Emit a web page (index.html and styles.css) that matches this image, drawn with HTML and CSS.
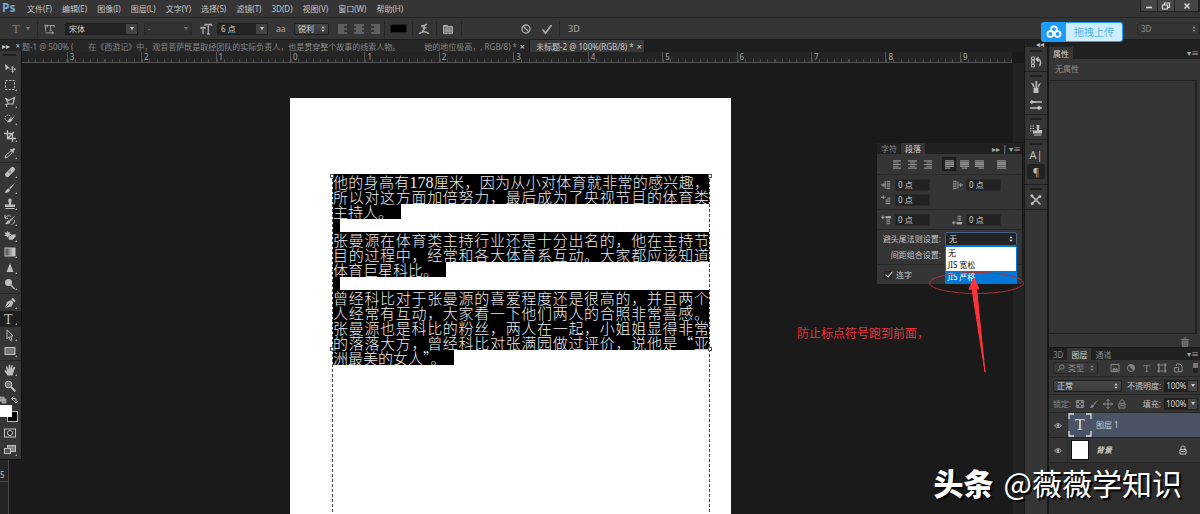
FILE: index.html
```
<!DOCTYPE html>
<html lang="zh-CN">
<head>
<meta charset="utf-8">
<title>未标题-2</title>
<link rel="stylesheet" href="styles.css">
</head>
<body>
<svg class="sprite" aria-hidden="true">
  <symbol id="move" viewBox="0 0 14 12"><path d="M1 1l6 5.2-3 .3L2.300 9z" fill="currentColor"/><path d="M10 4v7M6.500 7.500h7M10 4l-1 1.200h2zM10 11l-1-1.200h2zM13.500 7.500l-1.200-1v2z" stroke="currentColor" fill="currentColor" stroke-width=".9"/></symbol>
  <symbol id="marquee" viewBox="0 0 12 12"><rect x="1.500" y="1.500" width="9" height="9" fill="none" stroke="currentColor" stroke-dasharray="2.200 1.400"/></symbol>
  <symbol id="lasso" viewBox="0 0 12 12"><path d="M1.500 2l3 2.500L10.500 1.500 9 8H4.500zM4.500 8L2 8.500l1 2.500" fill="none" stroke="currentColor" stroke-width="1.200"/></symbol>
  <symbol id="quick" viewBox="0 0 12 12"><circle cx="4" cy="5" r="3" fill="none" stroke="currentColor" stroke-dasharray="1.500 1"/><path d="M11.500 1.500L7.500 6 6 5.500C4.500 6 4.500 8 3 9c2 .8 4.500.3 5-2z" fill="currentColor"/></symbol>
  <symbol id="crop" viewBox="0 0 12 12"><path d="M3.500 0v8.500H12M0 3.500h8.500V12M4 8l6-6" fill="none" stroke="currentColor" stroke-width="1.300"/></symbol>
  <symbol id="dropper" viewBox="0 0 12 12"><path d="M1 11l.6-2.300L6.500 4l1.600 1.600L3.300 10.400z" fill="none" stroke="currentColor"/><path d="M6 2.700L9.300 6l.9-.9-.7-.9C12.500 2 10.500 0 8 2.500l-1-.7z" fill="currentColor"/></symbol>
  <symbol id="heal" viewBox="0 0 12 12"><rect x="0" y="3.700" width="12" height="4.600" rx="2" transform="rotate(-45 6 6)" fill="currentColor"/><path d="M6 4.500v3M4.500 6h3" stroke="#444" stroke-width=".8" stroke-dasharray="1 .6"/></symbol>
  <symbol id="brush" viewBox="0 0 12 12"><path d="M11.500.5L6.500 7 5 6zM4.500 6.500L6 7.700C5.500 10.500 3 11 .5 10.500 2.500 9.500 2 7 4.500 6.500z" fill="currentColor"/></symbol>
  <symbol id="stamp" viewBox="0 0 12 12"><path d="M4.300 1.500C5 .2 7 .2 7.700 1.500 8 3 7 4 7 6.500h4V9H1V6.500h4C5 4 4 3 4.300 1.500zM1.500 10h9v1h-9z" fill="currentColor"/></symbol>
  <symbol id="history" viewBox="0 0 12 12"><path d="M11.500 1.500L7 7 5.500 6zM5 6.300l1.500 1.200C6 10 3.500 10.500 1 10c2-1 1.500-3.300 4-3.700z" fill="currentColor"/><path d="M1 4c2-3 4-2.500 6-1.500M1 1v3.200h3M10.500 6c0 2.500-1 4-3 4.500" fill="none" stroke="currentColor"/></symbol>
  <symbol id="eraser" viewBox="0 0 14 12"><path d="M4 0l1 2 2-1-.5 2L9 4 6.500 5l.5 2-2-.5L3.500 8 3 6 .5 6 2 4 .5 2l2.300.3z" fill="currentColor"/><path d="M5 8l4-3.500 4.500-.5v3L10 10.500H6z" fill="currentColor"/></symbol>
  <symbol id="gradient" viewBox="0 0 12 12"><rect x="1" y="2" width="10" height="8" fill="url(#fade)" stroke="#bbb"/></symbol>
  <linearGradient id="fade"><stop stop-color="#444"/><stop offset="1" stop-color="#ddd"/></linearGradient>
  <symbol id="sharpen" viewBox="0 0 12 12"><path d="M6 1l3.500 9h-7z" fill="currentColor"/></symbol>
  <symbol id="dodge" viewBox="0 0 12 12"><circle cx="4.500" cy="4.500" r="3.500" fill="currentColor"/><path d="M6.500 6.500l4 4.500" stroke="currentColor" stroke-width="1.300"/></symbol>
  <symbol id="pen" viewBox="0 0 12 12"><path d="M1 11L3 5l4-2 2.500 2.500-2 4z" fill="currentColor"/><path d="M8 1.500l3 3" stroke="currentColor" stroke-width="2"/><path d="M1.500 10.500L5.500 6.500" stroke="#333" stroke-width=".9"/></symbol>
  <symbol id="arrow" viewBox="0 0 12 12"><path d="M3 .8v9l2-2 1.500 3.700 1.500-.7L6.500 7.300 9 7z" fill="none" stroke="currentColor"/></symbol>
  <symbol id="rect" viewBox="0 0 12 12"><rect x="1" y="2.500" width="10" height="7" fill="#777" stroke="currentColor"/></symbol>
  <symbol id="hand" viewBox="0 0 12 12"><path d="M3.500 11.500L.5 7c0-1 1-1.200 2.500.5L2 3c0-1 1.200-1 1.500 0l1 2.500L4.700 1.200c.2-1 1.300-1 1.400 0L6.500 5 7.400 1.500c.3-1 1.400-.7 1.300.3L8.200 5.500 9.800 3c.6-.8 1.600-.2 1.300.7L9.500 8.500 8.500 11.500z" fill="currentColor"/></symbol>
  <symbol id="zoom" viewBox="0 0 12 12"><circle cx="4.500" cy="4.500" r="3.300" fill="#777" stroke="currentColor"/><path d="M7 7l4.300 4.300" stroke="currentColor" stroke-width="2"/></symbol>
  <symbol id="mask" viewBox="0 0 12 12"><rect x=".5" y="2" width="11" height="8" fill="none" stroke="currentColor"/><circle cx="6" cy="6" r="2.500" fill="#222" stroke="currentColor"/></symbol>
  <symbol id="screens" viewBox="0 0 12 12"><rect x="3.500" y="1.500" width="8" height="6" fill="#888" stroke="currentColor"/><rect x=".5" y="4.500" width="6" height="5" fill="#555" stroke="currentColor"/></symbol>
  <symbol id="left" viewBox="0 0 10 10"><path d="M0 1h9M0 3h6M0 5h9M0 7h6M0 9h9" stroke="currentColor" stroke-width="1.200"/></symbol>
  <symbol id="center" viewBox="0 0 10 10"><path d="M0 1h10M2 3h6M0 5h10M2 7h6M0 9h10" stroke="currentColor" stroke-width="1.200"/></symbol>
  <symbol id="right" viewBox="0 0 10 10"><path d="M1 1h9M4 3h6M1 5h9M4 7h6M1 9h9" stroke="currentColor" stroke-width="1.200"/></symbol>
  <symbol id="jleft" viewBox="0 0 10 10"><path d="M0 1h10M0 3h10M0 5h10M0 7h10M0 9h6" stroke="currentColor" stroke-width="1.500"/></symbol>
  <symbol id="jcenter" viewBox="0 0 10 10"><path d="M0 1h10M0 3h10M0 5h10M0 7h10M2 9h6" stroke="currentColor" stroke-width="1.500"/></symbol>
  <symbol id="jright" viewBox="0 0 10 10"><path d="M0 1h10M0 3h10M0 5h10M0 7h10M4 9h6" stroke="currentColor" stroke-width="1.500"/></symbol>
  <symbol id="jall" viewBox="0 0 10 10"><path d="M0 1h10M0 3h10M0 5h10M0 7h10M0 9h10" stroke="currentColor" stroke-width="1.500"/></symbol>
  <symbol id="indl" viewBox="0 0 12 10"><path d="M0 5h5M2.500 3v4M6 1h4M6 3h4M6 5h4M6 7h4M6 9h4M4.500 1v8" stroke="currentColor" stroke-width=".9"/></symbol>
  <symbol id="indr" viewBox="0 0 12 10"><path d="M7 5h5M9.500 3v4M1 1h4M1 3h4M1 5h4M1 7h4M1 9h4M6.500 1v8" stroke="currentColor" stroke-width=".9"/></symbol>
  <symbol id="first" viewBox="0 0 12 10"><path d="M0 2h5M2.500 0v4M7 3h3M5 5h5M5 7h5M5 9h5" stroke="currentColor" stroke-width=".9"/></symbol>
  <symbol id="before" viewBox="0 0 12 10"><path d="M0 2h4M2 0v4" stroke="currentColor"/><path d="M5 2h6" stroke="currentColor" stroke-width="2.500"/><path d="M6 5h4M6 7h4M6 9h4" stroke="currentColor" stroke-width=".9"/></symbol>
  <symbol id="after" viewBox="0 0 12 10"><path d="M0 8h4M2 6v4" stroke="currentColor"/><path d="M5 8.500h6" stroke="currentColor" stroke-width="2.500"/><path d="M6 1h4M6 3h4M6 5h4" stroke="currentColor" stroke-width=".9"/></symbol>
  <symbol id="eye" viewBox="0 0 10 8"><path d="M.8 4.500C2.500.8 7.500.8 9.200 4.500 7.500 7.200 2.500 7.200.8 4.500z" fill="none" stroke="currentColor"/><circle cx="5" cy="4" r="1.500" fill="currentColor"/></symbol>
  <symbol id="lock" viewBox="0 0 10 10"><path d="M3 4.500V2.500C3 .5 7 .5 7 2.500v2M2 4.500h6v4.500H2zM3 6.500h4" fill="none" stroke="currentColor"/></symbol>
  <symbol id="updown" viewBox="0 0 6 8"><path d="M3 0l2.500 3h-5zM3 8L.5 5h5z" fill="currentColor"/></symbol>
</svg>

<div class="app">
  <header class="menubar">
    <span class="brand">Ps</span>
    <nav class="menus">
      <button>文件(F)</button><button>编辑(E)</button><button>图像(I)</button><button>图层(L)</button><button>文字(Y)</button><button>选择(S)</button><button>滤镜(T)</button><button>3D(D)</button><button>视图(V)</button><button>窗口(W)</button><button>帮助(H)</button>
    </nav>
    <div class="window-buttons">
      <button aria-label="最小化"><svg viewBox="0 0 10 8"><path d="M2 5.500h6" stroke="#ddd" stroke-width="1.600"/></svg></button>
      <button aria-label="还原"><svg viewBox="0 0 10 8"><path d="M3.500 2.500V1h5v4.500H7M1.500 3h5v4h-5z" fill="none" stroke="#ddd" stroke-width="1.200"/></svg></button>
      <button class="close" aria-label="关闭"><svg viewBox="0 0 10 8"><path d="M2.500 1.500l5 5M7.500 1.500l-5 5" stroke="#ddd" stroke-width="1.400"/></svg></button>
    </div>
  </header>

  <div class="options">
    <button class="tool-preset">T <i class="caret"></i></button>
    <button class="orient" aria-label="切换方向"><svg viewBox="0 0 14 12"><path d="M3 1v8M1.500 3L3 1l1.500 2M5 2h8M5 1v3M13 1v3M9 2v6M7.500 8h3M3 10.500h9M10.500 9l2 1.500-2 1.500" fill="none" stroke="currentColor"/></svg></button>
    <span class="combo font"><select aria-label="字体"><option>宋体</option></select></span>
    <span class="combo style"><select aria-label="样式" disabled><option>-</option></select></span>
    <svg class="size-icon" viewBox="0 0 12 12"><path d="M1 6V4.500h4V6M3 5v6M5 3V1.500h6.500V3M8.300 2v9M7 11h2.800" fill="none" stroke="currentColor" stroke-width="1.300"/></svg>
    <span class="combo size"><select aria-label="字号"><option>6 点</option></select></span>
    <span class="aa">a<small>a</small></span>
    <span class="combo alias spin"><select aria-label="消除锯齿"><option>锐利</option></select><svg><use href="#updown"/></svg></span>
    <div class="group aligns">
      <button aria-label="左对齐"><svg><use href="#left"/></svg></button><button aria-label="居中"><svg><use href="#center"/></svg></button><button aria-label="右对齐"><svg><use href="#right"/></svg></button>
    </div>
    <div class="group"><button class="color" aria-label="颜色"></button></div>
    <div class="group warp"><button aria-label="变形"><svg viewBox="0 0 12 12"><path d="M3 3c3 0 5-1 6-2M6.500 2L6 7M4.500 5h4M1.500 11c1-3 8-3 9 0M6 6.500L4 8.500" fill="none" stroke="currentColor" stroke-width="1.300"/></svg></button></div>
    <div class="group folder"><button aria-label="面板"><svg viewBox="0 0 12 12"><path d="M1.500 2.500h4v1h5v7h-9z" fill="#777" stroke="currentColor"/><path d="M1 3h5M3 6h6M3 8h6" stroke="currentColor"/></svg></button></div>
    <div class="group commit">
      <button aria-label="取消"><svg viewBox="0 0 12 12"><circle cx="6" cy="6" r="4" fill="none" stroke="currentColor" stroke-width="1.300"/><path d="M3 3l6 6" stroke="currentColor" stroke-width="1.300"/></svg></button>
      <button aria-label="提交"><svg viewBox="0 0 12 12"><path d="M1.500 6.500L4.500 10l6-8" fill="none" stroke="currentColor" stroke-width="1.800"/></svg></button>
    </div>
    <div class="group three"><button>3D</button></div>
    <span class="combo workspace-pick spin"><select aria-label="工作区"><option>3D</option></select><svg><use href="#updown"/></svg></span>
  </div>

  <main class="workspace">
    <div class="left-column">
      <div class="toolbar-head"><span>▸▸</span><span>×</span></div>
      <div class="toolbar">
        <i class="grip"></i>
        <div class="tools">
          <button class="plain" aria-label="移动"><svg><use href="#move"/></svg></button>
          <button aria-label="选框"><svg><use href="#marquee"/></svg></button>
          <button aria-label="套索"><svg><use href="#lasso"/></svg></button>
          <button aria-label="快速选择"><svg><use href="#quick"/></svg></button>
          <button aria-label="裁剪"><svg><use href="#crop"/></svg></button>
          <button aria-label="吸管"><svg><use href="#dropper"/></svg></button>
        </div>
        <div class="tools">
          <button aria-label="修复"><svg><use href="#heal"/></svg></button>
          <button aria-label="画笔"><svg><use href="#brush"/></svg></button>
          <button aria-label="图章"><svg><use href="#stamp"/></svg></button>
          <button aria-label="历史画笔"><svg><use href="#history"/></svg></button>
          <button aria-label="橡皮擦"><svg><use href="#eraser"/></svg></button>
          <button aria-label="渐变"><svg><use href="#gradient"/></svg></button>
          <button aria-label="锐化"><svg><use href="#sharpen"/></svg></button>
          <button aria-label="减淡"><svg><use href="#dodge"/></svg></button>
        </div>
        <div class="tools">
          <button aria-label="钢笔"><svg><use href="#pen"/></svg></button>
          <button class="type active">T</button>
          <button aria-label="路径选择"><svg><use href="#arrow"/></svg></button>
          <button aria-label="矩形"><svg><use href="#rect"/></svg></button>
        </div>
        <div class="tools">
          <button aria-label="抓手"><svg><use href="#hand"/></svg></button>
          <button class="plain" aria-label="缩放"><svg><use href="#zoom"/></svg></button>
        </div>
        <svg class="swatches" viewBox="0 0 22 30"><path d="M0 2h4v4H0zM2 4h4v4H2z" fill="#888" stroke="#bbb" stroke-width=".7"/><path d="M12 3.500h4v4M13.500 1.500l-2 2 2 2M14 6l2 2 2-2" fill="none" stroke="#bbb"/><rect x="7.500" y="16.500" width="10" height="10" fill="#000" stroke="#bbb"/><path d="M0 10h12v12H0z" fill="#fff"/></svg>
        <div class="tools">
          <button class="plain" aria-label="快速蒙版"><svg><use href="#mask"/></svg></button>
          <button aria-label="屏幕模式"><svg><use href="#screens"/></svg></button>
        </div>
      </div>
      <div class="vruler"><span>5</span></div>
    </div>

    <section class="document">
      <div class="doc-tabs">
        <button class="doc-tab first"><span>题-1 @ 500% (</span><span class="title">在《西游记》中，观音菩萨既是取经团队的实际负责人，也是贯穿整个故事的线索人物。</span><span>她的地位极高，, RGB/8) *</span><b>×</b></button>
        <button class="doc-tab current"><span>未标题-2 @ 100%(RGB/8) *</span><b>×</b></button>
      </div>
      <div class="ruler"><span></span><span>3</span><span>2</span><span>1</span><span>0</span><span>1</span><span>2</span><span>3</span><span>4</span><span>5</span><span>6</span><span>7</span><span>8</span><span>9</span></div>
      <div class="canvas">
        <article class="page">
          <div class="text-frame">
            <i class="handle tl"></i><i class="handle tr"></i><i class="handle bl"></i><i class="handle br"></i>
            <p>
              <span class="full">他的身高有<span class="num">178</span>厘米，因为从小对体育就非常的感兴趣，</span>
              <span class="full">所以对这方面加倍努力，最后成为了央视节目的体育类</span>
              <span class="last">主持人。</span>
            </p>
            <p>
              <span class="full">张曼源在体育类主持行业还是十分出名的，他在主持节</span>
              <span class="full">目的过程中，经常和各大体育系互动。大家都应该知道</span>
              <span class="last">体育巨星科比。</span>
            </p>
            <p>
              <span class="full">曾经科比对于张曼源的喜爱程度还是很高的，并且两个</span>
              <span class="full">人经常有互动，大家看一下他们两人的合照非常喜感。</span>
              <span class="full">张曼源也是科比的粉丝，两人在一起，小姐姐显得非常</span>
              <span class="full">的落落大方，曾经科比对张满园做过评价，说他是“亚</span>
              <span class="last">洲最美的女人”。</span>
            </p>
          </div>
        </article>
      </div>
    </section>

    <aside class="rail">
      <div class="rail-head">◂◂</div>
      <div class="rail-group"><button aria-label="历史记录"><svg viewBox="0 0 12 12"><path d="M1.500 1h3v2.500h-3zM1.500 4.700h3v2.500h-3zM1.500 8.400h3v2.500h-3z" fill="none" stroke="currentColor"/><path d="M7 3.500h2c2 1 2 4 .5 6.500M8.500 1L6.300 3.500l2.200 2" fill="none" stroke="currentColor" stroke-width="1.500"/></svg></button></div>
      <div class="rail-group"><button aria-label="画笔"><svg viewBox="0 0 12 12"><path d="M3.500 7h5v5h-5zM1 2l2.500.5L5 7H4zM5.500 0h1.600v7H5.500zM11 2L8.500 3 7.500 7h.7z" fill="currentColor"/></svg></button><button aria-label="画笔预设"><svg viewBox="0 0 12 12"><path d="M0 3h12M0 9h12" stroke="currentColor" stroke-width="1.300"/><path d="M1 1l5 2-5 2zM7 9c1-3 4-2 4 0s-3 3-4 0z" fill="currentColor"/></svg></button></div>
      <div class="rail-group"><button aria-label="仿制源"><svg viewBox="0 0 12 12"><path d="M0 2h4M0 4.500h4M0 7h4" stroke="currentColor" stroke-dasharray="1.500 1"/><path d="M6.500 1h3L9 6h3v3.500H3V6.500h4zM4 10.500h7.500v1H4z" fill="currentColor"/></svg></button></div>
      <div class="rail-group text-panels"><button class="char">A|</button><button class="active">¶</button></div>
      <div class="rail-group"><button aria-label="工具预设"><svg viewBox="0 0 12 12"><path d="M2 2l8.500 8.500M10 2L2 10" stroke="currentColor" stroke-width="1.600"/><path d="M0 1.500L2 0l1.800 2L2 3.800zM9 1l2.500.5L11 4 8.500 3.500zM.5 9l2-1L4 10 1.500 11.500z" fill="currentColor"/></svg></button></div>
    </aside>

    <aside class="panels">
      <div class="panel-gap"></div>
      <section class="panel properties">
        <div class="panel-tabs"><button class="current">属性</button><span class="panel-menu">▾≡</span></div>
        <p class="empty">无属性</p>
        <div class="void"></div>
        <footer><button aria-label="删除"><svg viewBox="0 0 10 10"><path d="M1 2.500h8M3.500 1h3M2 4h6L7.500 9.500h-5z" fill="#666" stroke="#777"/></svg></button></footer>
      </section>
      <section class="panel layers">
        <div class="panel-tabs"><button>3D</button><button class="current">图层</button><button>通道</button><span class="panel-menu">▾≡</span></div>
        <div class="row filter">
          <span class="combo kind spin"><svg class="search" viewBox="0 0 8 8"><circle cx="4.800" cy="3" r="2.200" fill="none" stroke="currentColor"/><path d="M3 4.500L.8 7" stroke="currentColor"/></svg><select aria-label="类型"><option>类型</option></select><svg><use href="#updown"/></svg></span>
          <svg viewBox="0 0 10 10"><path d="M1 1.500h8v7H1z" fill="none" stroke="currentColor"/><path d="M2 7.500l2-3 1.500 1.500L7 5l1.500 2.500z" fill="currentColor"/></svg>
          <svg viewBox="0 0 10 10"><circle cx="5" cy="5" r="3.500" fill="none" stroke="currentColor"/><path d="M2.500 2.500a3.500 3.500 0 0 1 5 5z" fill="currentColor"/></svg>
          <span class="serif">T</span>
          <svg viewBox="0 0 10 10"><path d="M2 2h6v6H2zM0 2h2M8 2h2M0 8h2M8 8h2M2 0v10M8 0v10" fill="none" stroke="currentColor"/></svg>
          <svg viewBox="0 0 10 10"><path d="M3.500 3V1h3.500l2 2v5.500H5.500M1.500 4.500h4v4.500h-4z" fill="none" stroke="currentColor"/></svg>
          <i class="toggle"></i>
        </div>
        <div class="row">
          <span class="combo blend spin"><select aria-label="混合模式"><option>正常</option></select><svg><use href="#updown"/></svg></span>
          <label class="amount">不透明度:<input value="100%"></label><i class="drop"></i>
        </div>
        <div class="row locks">
          <span class="dim">锁定:</span>
          <svg viewBox="0 0 10 10"><path d="M1.500 1.500h7v7h-7z" fill="none" stroke="currentColor"/><path d="M2 2h2v2H2zM6 2h2v2H6zM4 4h2v2H4zM2 6h2v2H2zM6 6h2v2H6z" fill="currentColor"/></svg>
          <svg><use href="#brush"/></svg>
          <svg viewBox="0 0 10 10"><path d="M5 0v10M0 5h10M3.500 2L5 .5 6.500 2M3.500 8L5 9.500 6.500 8M2 3.500L.5 5 2 6.500M8 3.500L9.500 5 8 6.500" fill="none" stroke="currentColor"/></svg>
          <svg><use href="#lock"/></svg>
          <label class="amount">填充:<input value="100%"></label><i class="drop"></i>
        </div>
        <ul class="layer-list">
          <li class="selected"><button class="eye" aria-label="可见"><svg><use href="#eye"/></svg></button><span class="thumb text"><svg viewBox="0 0 24 24"><path d="M1 6V1h5M18 1h5v5M23 18v5h-5M6 23H1v-5" fill="none" stroke="#ddd" stroke-width="1.300"/></svg>T</span><span class="name">图层 1</span></li>
          <li><button class="eye" aria-label="可见"><svg><use href="#eye"/></svg></button><span class="thumb blank"></span><span class="name italic">背景</span><svg class="locked"><use href="#lock"/></svg></li>
        </ul>
      </section>
    </aside>

    <section class="paragraph-panel">
      <div class="panel-tabs"><button>字符</button><button class="current">段落</button><span class="panel-menu">▸▸ | ▾≡</span></div>
      <div class="justify">
        <button aria-label="左对齐"><svg><use href="#left"/></svg></button><button aria-label="居中"><svg><use href="#center"/></svg></button><button aria-label="右对齐"><svg><use href="#right"/></svg></button>
        <button class="active" aria-label="末行左对齐"><svg><use href="#jleft"/></svg></button><button aria-label="末行居中"><svg><use href="#jcenter"/></svg></button><button aria-label="末行右对齐"><svg><use href="#jright"/></svg></button>
        <button class="all" aria-label="全部对齐"><svg><use href="#jall"/></svg></button>
      </div>
      <div class="fields">
        <label><svg><use href="#indl"/></svg><input aria-label="左缩进" value="0 点"></label>
        <label><svg><use href="#indr"/></svg><input aria-label="右缩进" value="0 点"></label>
        <label><svg><use href="#first"/></svg><input aria-label="首行缩进" value="0 点"></label>
      </div>
      <div class="fields">
        <label><svg><use href="#before"/></svg><input aria-label="段前" value="0 点"></label>
        <label><svg><use href="#after"/></svg><input aria-label="段后" value="0 点"></label>
      </div>
      <div class="rules">
        <label for="kinsoku">避头尾法则设置:</label>
        <div class="picker">
          <span class="combo kinsoku spin"><select id="kinsoku"><option>无</option></select><svg><use href="#updown"/></svg></span>
          <ul class="menu" role="listbox" aria-label="避头尾法则"><li role="option">无</li><li role="option">JIS 宽松</li><li role="option" class="hover" aria-selected="true">JIS 严格</li></ul>
        </div>
        <span class="second">间距组合设置:</span>
      </div>
      <label class="hyphen"><input type="checkbox" checked>连字</label>
    </section>

    <p class="note">防止标点符号跑到前面，</p>
    <svg class="marker" viewBox="0 0 96 110"><ellipse cx="47.500" cy="12" rx="47" ry="10.500" fill="none" stroke="#b03035"/><path d="M45 7l5 11-2.500-.5L56 101 43 18l-3 .5z" fill="#ff3338" stroke="#ff3338" stroke-linejoin="round"/></svg>
    <button class="upload"><svg viewBox="0 0 24 20"><g fill="none" stroke="#fff" stroke-width="2"><circle cx="12" cy="7" r="3.200"/><circle cx="8" cy="12.300" r="3.200"/><circle cx="16" cy="12.300" r="3.200"/></g></svg><span>拖拽上传</span></button>
    <div class="watermark"><b>头条</b><span>@薇薇学知识</span></div>
  </main>
</div>
</body>
</html>
```
FILE: styles.css
```
* { box-sizing: border-box; }
body, p, ul { margin: 0; padding: 0; }
ul { list-style: none; }
i { font-style: normal; }
body {
  background: #1a1a1a;
  color: #c4c4c4;
  font: 8px/12px "Noto Sans", "Noto Sans CJK SC", sans-serif;
}
button, input, select {
  appearance: none;
  margin: 0;
  padding: 0;
  border: 0;
  border-radius: 0;
  background: none;
  color: inherit;
  font: inherit;
  min-width: 0;
}
select:disabled { opacity: 1; }
svg { display: block; width: 10px; height: 10px; flex: none; }
.sprite { position: absolute; width: 0; height: 0; }
.app { display: flex; flex-direction: column; height: 100vh; overflow: hidden; }

/* Menu bar */
.menubar { display: flex; flex: none; height: 18px; background: #353535; border-bottom: 1px solid #252525; }
.brand { width: 27px; padding-left: 2px; color: #74a5d8; font-size: 12px; line-height: 16px; font-weight: 700; }
.menus { display: flex; gap: 10px; flex: 1; }
.menus button { line-height: 16px; }
.window-buttons { display: flex; height: 12px; background: #454545; border: 1px solid #222; border-top: 0; }
.window-buttons button { display: grid; place-items: center; width: 17px; border-right: 1px solid #222; }
.window-buttons .close { width: 24px; }
.window-buttons svg { height: 8px; }

/* Options bar */
.options { display: flex; flex: none; align-items: center; height: 22px; background: #353535; border-bottom: 1px solid #1c1c1c; color: #aaa; }
.options svg { width: 12px; height: 12px; }
.tool-preset { display: flex; align-items: center; gap: 6px; width: 38px; padding-left: 12px; border-right: 1px solid #292929; color: #808080; font: 13px/18px "Liberation Serif", serif; }
.caret { border: 2px solid transparent; border-top: 3px solid currentColor; border-bottom: 0; }
.orient { width: 25px; padding-left: 5px; }
.combo { display: flex; align-items: center; position: relative; height: 12px; border: 1px solid #1e1e1e; background: #242424; color: #d2d2d2; }
.combo select { flex: 1; width: 100%; padding-left: 3px; line-height: 10px; }
.combo::after { content: ""; position: absolute; right: 3px; border: 2px solid transparent; border-top: 3px solid #ccc; border-bottom: 0; pointer-events: none; }
.combo.spin { background: linear-gradient(#484848, #3a3a3a); border-radius: 2px; }
.combo.spin::after { display: none; }
.combo.spin svg:last-child { position: absolute; right: 3px; width: 4px; height: 6px; pointer-events: none; }
.font { width: 73px; margin-left: 2px; }
.style { width: 48px; margin-left: 6px; background: #323232; border-color: #292929; color: #777; }
.style::after { border-top-color: #777; }
.font select, .size select { background: linear-gradient(#444, #444) right / 11px 100% no-repeat; }
.size-icon { margin: 0 5px 0 8px; }
.size { width: 51px; }
.aa { margin: 0 8px; width: 10px; font-size: 9px; white-space: nowrap; }
.aa small { font-size: 8px; }
.alias { width: 35px; }
.group { display: flex; align-items: center; height: 16px; padding: 0 5px; border-right: 1px solid #292929; }
.aligns { gap: 6px; width: 56px; padding: 0 0 0 9px; color: #8a8a8a; }
.aligns svg { width: 10px; height: 10px; }
.color { width: 17px; height: 9px; background: #000; border: 1px solid #222; }
.group.warp { width: 24px; }
.group.folder { width: 25px; padding-left: 5px; }
.commit { gap: 9px; width: 98px; padding-left: 58px; }
.three { flex: 1; border: 0; padding-left: 8px; font-size: 9px; }
.workspace-pick { width: 63px; border-color: #292929; color: #888; }
.workspace-pick.spin { background: #353535; }

/* Tool column */
.workspace { display: flex; flex: 1; min-height: 0; position: relative; }
.left-column { display: flex; flex-direction: column; width: 22px; background: #1a1a1a; }
.toolbar-head { display: flex; justify-content: space-between; height: 11px; padding: 0 2px; background: #252525; font-size: 8px; line-height: 12px; }
.toolbar { display: flex; flex-direction: column; padding-top: 3px; background: #353535; border-right: 1px solid #111; border-bottom: 1px solid #111; color: #bebebe; }
.grip { height: 2px; width: 13px; margin-left: 3px; margin-bottom: 4px; background: #202020; }
.tools { display: grid; grid-auto-rows: 16px; row-gap: 1px; padding-bottom: 1px; }
.tools + .tools { row-gap: 0; border-top: 1px solid #272727; padding-top: 1px; }
.tools button { position: relative; display: grid; align-items: center; padding-left: 4px; text-align: left; }
.tools svg { width: 12px; height: 12px; }
.tools button::after { content: ""; position: absolute; right: 4px; bottom: 2px; border-left: 2px solid transparent; border-bottom: 2px solid #aaa; }
.tools .plain::after { display: none; }
.tools .type { font: 14px/15px "Liberation Serif", serif; }
.tools .active { background: #1e1e1e; }
.swatches { width: 22px; height: 30px; }
.vruler { flex: 1; width: 9px; background: #242424; border-right: 1px solid #484848; border-top: 0; padding-top: 9px; }
.vruler span { display: block; border-bottom: 1px solid #484848; }

/* Document */
.document { display: flex; flex-direction: column; flex: 1; min-width: 0; }
.doc-tabs { display: flex; height: 12px; flex: none; background: #1f1f1f; overflow: hidden; }
.doc-tab { display: flex; align-items: center; line-height: 11px; color: #858585; background: #262626; border-right: 1px solid #181818; white-space: pre; }
.doc-tab b { font-size: 9px; margin-left: 3px; color: #b5b5b5; }
.doc-tab.first { width: 508px; padding-right: 4px; }
.doc-tab .title { margin: 0 24px 0 15px; }
.doc-tab.first b { margin-left: auto; }
.doc-tab.current { background: #393939; color: #c8c8c8; padding: 0 2px 0 6px; }
.ruler { display: grid; grid-template-columns: 6fr repeat(12, 10fr) 7fr; flex: none; height: 11px; margin-right: 12px; background: #242424; border-bottom: 1px solid #555; }
.ruler span { padding-left: 2px; border-left: 1px solid #555; color: #a5a5a5; line-height: 9px; background: repeating-linear-gradient(to right, #4a4a4a 0 1px, transparent 1px 10%) bottom / 100% 3px no-repeat; }
.ruler span:first-child { border: 0; background-image: repeating-linear-gradient(to left, #4a4a4a 0 1px, transparent 1px 17%); }
.ruler span:last-child { background-image: repeating-linear-gradient(to right, #4a4a4a 0 1px, transparent 1px 14%); }
.canvas { flex: 1; min-height: 0; display: flex; justify-content: center; padding: 35px 25px 0 0; background: linear-gradient(#222, #222) right / 11px 100% no-repeat #1a1a1a; }
.page { width: 441px; padding: 76px 21px 0 42px; background: #fff; }
.text-frame { position: relative; height: 100%; color: #ececec; font: 300 15px/15px "Noto Sans CJK SC", sans-serif; background: repeating-linear-gradient(#444 0 3px, transparent 3px 5px) left / 1px 100% no-repeat, repeating-linear-gradient(#444 0 3px, transparent 3px 5px) right / 1px 100% no-repeat; padding: 0 1px; }
.text-frame p + p { position: relative; margin-top: 13px; }
.text-frame p + p::before { content: ""; position: absolute; top: -13px; left: 0; width: 7px; height: 13px; background: #000; }
.full { display: block; height: 15px; background: #000; text-align: justify; text-align-last: justify; white-space: nowrap; }
.last { display: block; width: fit-content; height: 15px; padding-right: 8px; background: #000; }
.num { font-family: "Liberation Serif", serif; font-size: 16px; }
.handle { position: absolute; z-index: 1; width: 4px; height: 4px; border: 1px solid #555; background: #fff; }
.tl { left: -2px; top: 0; }
.tr { right: -2px; top: 0; }
.bl { left: -2px; top: 173px; }
.br { right: -2px; top: 173px; }

/* Icon rail */
.rail { width: 25px; background: #353535; border: solid #181818; border-width: 0 2px 0 1px; color: #bdbdbd; }
.rail-head { height: 7px; padding-right: 3px; background: #202020; text-align: right; font-size: 8px; line-height: 7px; }
.rail-group { display: flex; flex-direction: column; align-items: center; padding-top: 6px; border-bottom: 1px solid #202020; background: linear-gradient(#202020, #202020) 50% 3px / 12px 2px no-repeat; }
.rail-group button { display: grid; place-items: center; width: 18px; height: 18px; }
.rail-group svg { width: 12px; height: 12px; }
.rail-group.text-panels { padding-bottom: 5px; }
.rail-group .char { font-size: 11px; }
.rail-group .active { height: 15px; background: #222; border-radius: 2px; font-size: 10px; }

/* Panels */
.panels { display: flex; flex-direction: column; width: 151px; background: #2d2d2d; }
.panel-gap { height: 7px; background: #202020; }
.panel { background: #353535; }
.panel-tabs { display: flex; height: 12px; background: #212121; color: #858585; }
.panel-tabs button { padding: 0 4px; line-height: 11px; }
.panel-tabs .current { background: #353535; color: #d0d0d0; }
.panel-menu { margin-left: auto; padding-right: 1px; color: #aaa; }
.properties { display: flex; flex-direction: column; height: 301px; border-bottom: 1px solid #181818; }
.empty { padding: 4px 6px; color: #8f8f8f; height: 21px; }
.void { flex: 1; margin-right: 3px; border: solid #222; border-width: 1px 2px 1px 0; }
.properties footer { display: flex; justify-content: flex-end; height: 13px; padding: 2px 10px 0; }
.row { display: flex; align-items: center; height: 18px; padding: 0 2px 0 4px; gap: 5px; border-bottom: 1px solid #272727; }
.filter { height: 17px; color: #858585; gap: 6px; }
.filter .kind { width: 45px; margin-right: 6px; color: #858585; border-color: #292929; }
.filter .kind.spin { background: #383838; }
.filter .search { width: 8px; height: 8px; margin-left: 3px; }
.serif { width: 9px; font: 11px/12px "Liberation Serif", serif; text-align: center; }
.toggle { width: 5px; height: 10px; margin-left: auto; background: linear-gradient(#777 50%, #222 50%); }
.blend { width: 70px; }
.amount { display: flex; align-items: center; flex: 1; justify-content: flex-end; gap: 3px; white-space: nowrap; }
.amount input { width: 23px; height: 12px; padding-left: 2px; background: #202020; color: #d5d5d5; }
.drop { display: grid; place-items: center; width: 11px; height: 12px; margin-left: -5px; background: #454545; border: 1px solid #222; }
.drop::after { content: ""; border: 2px solid transparent; border-top: 3px solid #ccc; border-bottom: 0; }
.locks { color: #888; gap: 4px; }
.locks .amount { color: #c4c4c4; }
.locks .drop { margin-left: -4px; }
.layer-list li { display: flex; align-items: center; height: 25px; border-bottom: 1px solid #232323; }
.layer-list .selected { background: #4a5366; }
.eye { display: grid; place-items: center; width: 19px; height: 24px; border-right: 1px solid #292929; background: #353535; }
.eye svg { width: 8px; height: 7px; }
.thumb { position: relative; display: grid; place-items: center; width: 24px; height: 24px; margin-right: 4px; color: #ddd; font: 16px/20px "Liberation Serif", serif; }
.thumb svg { position: absolute; inset: 0; width: 24px; height: 24px; }
.blank { width: 18px; height: 20px; margin: 0 7px 0 3px; background: #fff; border: 1px solid #111; }
.name { color: #ccc; }
.italic { flex: 1; font-style: italic; font-weight: 700; }
.locked { margin-right: 12px; }

/* Floating paragraph panel */
.paragraph-panel { position: absolute; top: 102px; right: 177px; width: 147px; background: #353535; border: 1px solid #191919; }
.paragraph-panel .panel-tabs { height: 11px; }
.justify { display: flex; align-items: center; gap: 1px; height: 21px; padding-left: 13px; border-bottom: 1px solid #272727; color: #8f8f8f; }
.justify button { display: grid; place-items: center; width: 14px; height: 14px; }
.justify .active { margin-left: 7px; background: #222; border: 1px solid #1a1a1a; }
.justify .all { margin-left: 7px; }
.justify svg { width: 9px; height: 9px; }
.fields { display: grid; grid-template-columns: 71px 1fr; row-gap: 3px; padding: 4px 4px 3px; border-bottom: 1px solid #272727; }
.fields label { display: flex; align-items: center; gap: 3px; }
.fields svg { width: 11px; height: 10px; color: #aaa; }
.fields input { width: 35px; height: 12px; padding-left: 2px; background: #222; border: 1px solid #2a2a2a; color: #d0d0d0; }
.rules { display: grid; grid-template-columns: 61px 72px; column-gap: 4px; justify-content: start; padding: 2px 0 2px 3px; border-bottom: 1px solid #272727; text-align: right; line-height: 14px; }
.picker { position: relative; }
.kinsoku { height: 14px; border-color: #48628a; }
.kinsoku.spin { background: #242424; }
.second { grid-column: 1; padding-top: 2px; }
.menu { position: absolute; z-index: 1; top: 14px; left: 0; width: 100%; background: #fff; border: 1px solid #0078d7; color: #111; text-align: left; line-height: 12px; }
.menu li { padding-left: 2px; height: 12px; }
.menu .hover { background: #0078d7; color: #fff; }
.hyphen { display: flex; align-items: center; gap: 4px; height: 19px; padding-left: 7px; }
.hyphen input { width: 8px; height: 8px; background: #2a2a2a; border: 1px solid #222; position: relative; }
.hyphen input:checked::after { content: ""; position: absolute; left: 2px; top: -2px; width: 3px; height: 6px; border: solid #ddd; border-width: 0 1px 1px 0; transform: rotate(40deg); }

/* Overlays */
.note { position: absolute; top: 284px; right: 271px; color: #e8343a; font: 12px/18px "Noto Sans CJK SC", sans-serif; }
.marker { position: absolute; top: 231px; right: 175px; width: 96px; height: 110px; z-index: 2; }
.upload { position: absolute; top: -18px; right: 77px; display: flex; width: 82px; height: 20px; overflow: hidden; border: 1px solid #1c9cff; border-radius: 3px; background: #cdeeff; color: #54b4f5; font-size: 10px; line-height: 18px; }
.upload svg { width: 24px; height: 18px; background: #1c9cff; }
.upload span { flex: 1; }
.watermark { position: absolute; right: 18px; bottom: 12px; display: flex; gap: 10px; color: #fff; font: 30px/40px "Noto Sans CJK SC", sans-serif; text-shadow: 2px 2px 1px #000; white-space: nowrap; }
.watermark b { font-weight: 900; }
```
